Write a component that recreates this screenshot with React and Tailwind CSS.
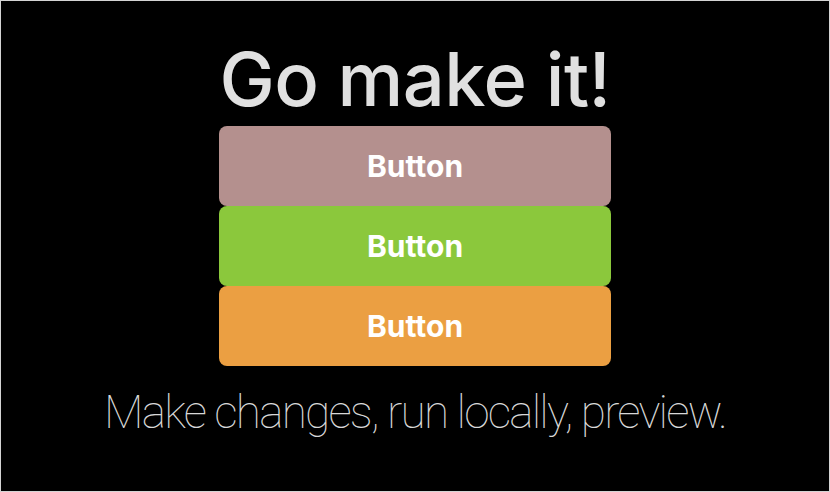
export default function App() {
  return (
    <div className="w-[830px] h-[492px] bg-black border border-[#d4d4d4] flex flex-col items-center" style={{ fontFamily: "Inter, 'Noto Sans', sans-serif" }}>
      <h1 className="mt-[36px] text-[74px] leading-[84px] font-medium text-[#e0e0e0] tracking-[-0.5px]">Go make it!</h1>
      <div className="mt-[5px] w-[392px] flex flex-col">
        <button className="h-[80px] rounded-[8px] bg-[#b4908e] text-white text-[30px] font-bold">Button</button>
        <button className="h-[80px] rounded-[8px] bg-[#8bc83c] text-white text-[30px] font-bold">Button</button>
        <button className="h-[80px] rounded-[8px] bg-[#eb9f42] text-white text-[30px] font-bold">Button</button>
      </div>
      <p className="mt-[18px] text-[46px] leading-[56px] font-thin text-[#d8d8d8] tracking-[-1.8px]" style={{ fontFamily: "Roboto, sans-serif" }}>Make changes, run locally, preview.</p>
    </div>
  );
}
